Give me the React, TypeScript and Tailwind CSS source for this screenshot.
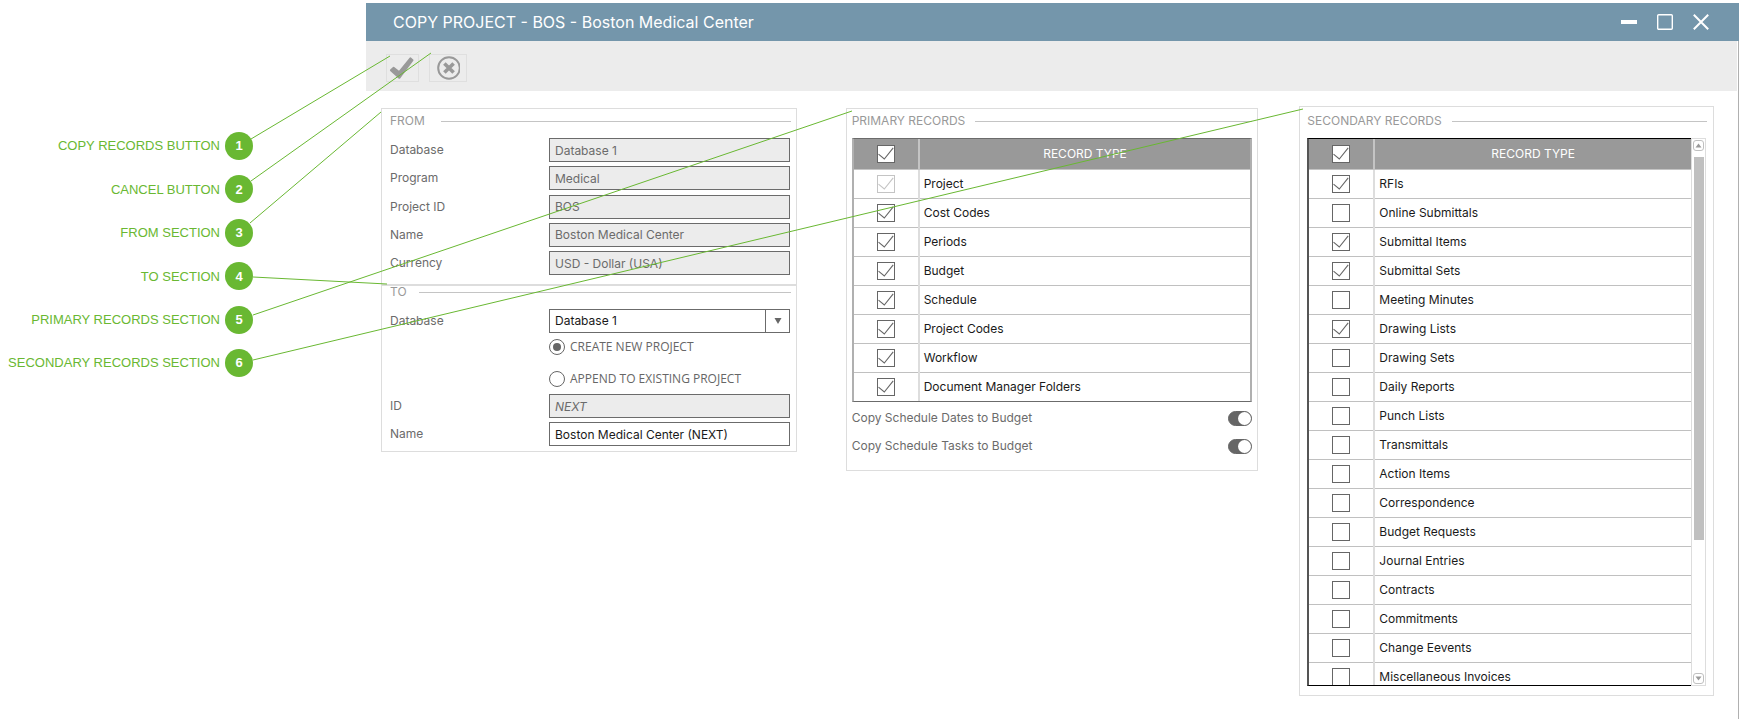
import type { ReactNode } from 'react';

const callouts = [
  'COPY RECORDS BUTTON',
  'CANCEL BUTTON',
  'FROM SECTION',
  'TO SECTION',
  'PRIMARY RECORDS SECTION',
  'SECONDARY RECORDS SECTION',
];

const leaders = [
  [251, 139, 390, 56],
  [251, 181, 431, 53],
  [250, 223, 381, 112],
  [253, 277, 387, 284],
  [253, 315, 852, 111],
  [253, 360, 1303, 109],
];

const fromFields = [
  ['Database', 'Database 1'],
  ['Program', 'Medical'],
  ['Project ID', 'BOS'],
  ['Name', 'Boston Medical Center'],
  ['Currency', 'USD - Dollar (USA)'],
];

type RecordRow = { name: string; checked?: boolean; locked?: boolean };

const primary: RecordRow[] = [
  { name: 'Project', checked: true, locked: true },
  { name: 'Cost Codes', checked: true },
  { name: 'Periods', checked: true },
  { name: 'Budget', checked: true },
  { name: 'Schedule', checked: true },
  { name: 'Project Codes', checked: true },
  { name: 'Workflow', checked: true },
  { name: 'Document Manager Folders', checked: true },
];

const secondary: RecordRow[] = [
  { name: 'RFIs', checked: true },
  { name: 'Online Submittals' },
  { name: 'Submittal Items', checked: true },
  { name: 'Submittal Sets', checked: true },
  { name: 'Meeting Minutes' },
  { name: 'Drawing Lists', checked: true },
  { name: 'Drawing Sets' },
  { name: 'Daily Reports' },
  { name: 'Punch Lists' },
  { name: 'Transmittals' },
  { name: 'Action Items' },
  { name: 'Correspondence' },
  { name: 'Budget Requests' },
  { name: 'Journal Entries' },
  { name: 'Contracts' },
  { name: 'Commitments' },
  { name: 'Change Eevents' },
  { name: 'Miscellaneous Invoices' },
];

function Legend({ children, gap }: { children: ReactNode; gap: string }) {
  return (
    <div className={`flex h-6 items-center ${gap}`}>
      <h2 className="text-xs text-[#999]">{children}</h2>
      <span className="h-px flex-1 bg-[#c4c4c4]" />
    </div>
  );
}

function Check({ label, checked, locked }: { label: string; checked?: boolean; locked?: boolean }) {
  return (
    <label className={`relative mx-auto block size-[18px] ${locked ? 'text-[#c4c4c4]' : 'text-[#666]'}`}>
      <input
        type="checkbox"
        aria-label={label}
        defaultChecked={checked}
        disabled={locked}
        className="peer block size-[18px] appearance-none border border-current bg-white"
      />
      <svg
        viewBox="0 0 18 18"
        className="pointer-events-none absolute inset-0 hidden size-[18px] peer-checked:block"
        fill="none"
        stroke="currentColor"
        strokeWidth="1.1"
      >
        <path d="M1.5 9.2 7.3 14 16.2 2.8" />
      </svg>
    </label>
  );
}

function RecordTable({ rows, label }: { rows: RecordRow[]; label: string }) {
  return (
    <table aria-label={label} className="w-full table-fixed border-collapse text-xs">
      <colgroup>
        <col className="w-[65px]" />
        <col />
      </colgroup>
      <thead>
        <tr className="h-[30px] border-b border-[#c4c4c4] bg-[#999] text-white">
          <th scope="col" className="border-r-2 border-[#c4c4c4] p-0">
            <Check label={`Select all ${label}`} checked />
          </th>
          <th scope="col" className="p-0 font-normal">RECORD TYPE</th>
        </tr>
      </thead>
      <tbody>
        {rows.map((r) => (
          <tr key={r.name} className="h-[29px] border-b border-[#c0c0c0] last:border-b-0">
            <td className="border-r-2 border-[#ddd] p-0">
              <Check label={r.name} checked={r.checked} locked={r.locked} />
            </td>
            <td className="px-1 py-0 text-[#1a1a1a]">{r.name}</td>
          </tr>
        ))}
      </tbody>
    </table>
  );
}

function Toggle({ id, children }: { id: string; children: ReactNode }) {
  return (
    <div className="flex h-7 items-center justify-between">
      <label htmlFor={id} className="text-xs text-[#6b6b6b]">{children}</label>
      <input
        id={id}
        type="checkbox"
        role="switch"
        defaultChecked
        className="h-[15px] w-6 appearance-none rounded-full border border-[#666] bg-[#666] before:block before:size-[13px] before:rounded-full before:bg-white checked:before:ml-[9px]"
      />
    </div>
  );
}

const fieldBase = 'h-6 w-full border border-[#6b6b6b] px-[5px] text-xs';

function Field({ id, label, children }: { id: string; label: string; children: ReactNode }) {
  return (
    <div className="flex items-center">
      <label htmlFor={id} className="w-[159px] shrink-0 text-[#6b6b6b]">{label}</label>
      <div className="min-w-0 flex-1">{children}</div>
    </div>
  );
}

function ProjectRadio({ children, checked }: { children: ReactNode; checked?: boolean }) {
  return (
    <label className="flex h-4 items-center gap-[5px] font-['Open_Sans',sans-serif] text-xs text-[#666]">
      <input
        type="radio"
        name="target"
        defaultChecked={checked}
        className="size-4 appearance-none rounded-full border border-[#666] bg-white p-[3px] before:block before:size-2 before:rounded-full checked:before:bg-[#666]"
      />
      {children}
    </label>
  );
}

function ScrollArrow({ down }: { down?: boolean }) {
  return (
    <button
      type="button"
      aria-label={down ? 'Scroll down' : 'Scroll up'}
      className="flex size-[11px] items-center justify-center rounded-[3px] border border-[#c0c0c0] text-[#999]"
    >
      <svg viewBox="0 0 7 5" className="h-[5px] w-[7px]" fill="currentColor">
        <path d={down ? 'M0.5 0.5h6L3.5 4.5z' : 'M0.5 4.5h6L3.5 0.5z'} />
      </svg>
    </button>
  );
}

export default function App() {
  return (
    <div className="relative flex min-h-screen bg-white pt-[3px] font-[Inter,sans-serif] text-xs">
      <aside className="w-[366px] shrink-0 pt-[129px]">
        <ol className="flex h-[245px] w-[253px] flex-col justify-between font-['Liberation_Sans',sans-serif] text-[13px] text-[#69b832]">
          {callouts.map((c, i) => (
            <li key={c} className="flex items-center justify-end gap-[5px]">
              <span>{c}</span>
              <span className="flex size-7 items-center justify-center rounded-full bg-[#69b832] font-bold text-white">
                {i + 1}
              </span>
            </li>
          ))}
        </ol>
      </aside>

      <main className="mr-[3px] flex min-w-0 flex-1 flex-col">
        <header className="flex h-[38px] items-center justify-between bg-[#7496ab] pr-[30px] pl-[27px] text-white">
          <h1 className="text-base">COPY PROJECT - BOS - Boston Medical Center</h1>
          <div className="flex items-center gap-5">
            <button type="button" aria-label="Minimize">
              <svg viewBox="0 0 16 16" className="size-4" fill="currentColor">
                <path d="M0 6h16v4H0z" />
              </svg>
            </button>
            <button type="button" aria-label="Maximize">
              <svg viewBox="0 0 16 16" className="size-4" fill="none" stroke="currentColor" strokeWidth="1.4">
                <rect x="0.7" y="0.7" width="14.6" height="14.6" rx="1" />
              </svg>
            </button>
            <button type="button" aria-label="Close">
              <svg viewBox="0 0 16 16" className="size-4" fill="none" stroke="currentColor" strokeWidth="2">
                <path d="M0.8 0.8 15.2 15.2M15.2 0.8 0.8 15.2" />
              </svg>
            </button>
          </div>
        </header>

        <div className="mb-[3px] flex-1 border-r border-[#b0b0b0]">
          <div className="mr-px flex h-[50px] items-center gap-[10px] bg-[#ececec] pt-1 pl-5">
            <button type="button" aria-label="Copy records" className="h-7 w-[33px] border border-[#dfdfdf]">
              <svg viewBox="0 0 31 26" className="h-[26px] w-[31px]" fill="#999">
                <path d="M3.2 14.6 6 11.9Q6.6 11.4 7.2 11.9L12 15.7 22.6 2.7Q23.2 2 23.9 2.6L26.2 4.5Q26.8 5.1 26.3 5.8L13.3 23.2Q12.3 24.2 11.3 23.2L3.2 16Q2.6 15.3 3.2 14.6z" />
              </svg>
            </button>
            <button type="button" aria-label="Cancel" className="flex h-7 w-[38px] items-center justify-center border border-[#dfdfdf]">
              <svg viewBox="0 0 24 24" className="size-6" fill="none" stroke="#999">
                <circle cx="13" cy="12" r="10.8" strokeWidth="2" />
                <path d="M8.4 7.4 17.6 16.6M17.6 7.4 8.4 16.6" strokeWidth="3.6" />
              </svg>
            </button>
          </div>

          <div className="flex items-start pt-[15px] pr-6 pl-[15px]">
            <div className="mt-[2px] mr-[49px] min-w-0 flex-[416]">
              <section className="border border-[#ddd] pr-[5px] pb-[9px] pl-2">
                <Legend gap="gap-4">FROM</Legend>
                <div className="mt-[5px] mr-px flex h-[137px] flex-col justify-between">
                  {fromFields.map(([label, value]) => (
                    <Field key={label} id={`from-${label}`} label={label}>
                      <input
                        id={`from-${label}`}
                        readOnly
                        defaultValue={value}
                        className={`${fieldBase} bg-[#ececec] text-[#6b6b6b]`}
                      />
                    </Field>
                  ))}
                </div>
              </section>
              <section className="border border-[#ddd] pr-[5px] pb-[5px] pl-2">
                <div className="-mt-[6px]">
                  <Legend gap="gap-3">TO</Legend>
                </div>
                <div className="mt-[5px] mr-px flex flex-col gap-1">
                  <Field id="to-database" label="Database">
                    <div className="relative">
                      <select id="to-database" className={`${fieldBase} block appearance-none bg-white text-[#1a1a1a]`}>
                        <option>Database 1</option>
                      </select>
                      <span className="pointer-events-none absolute inset-y-0 right-0 flex w-[25px] items-center justify-center border-l border-[#6b6b6b] text-[#666]">
                        <svg viewBox="0 0 8 8" className="size-2" fill="currentColor">
                          <path d="M0.5 1h7L4 7z" />
                        </svg>
                      </span>
                    </div>
                  </Field>
                  <div className="mt-[2px] mb-[3px] flex flex-col gap-4 pl-[159px]">
                    <ProjectRadio checked>CREATE NEW PROJECT</ProjectRadio>
                    <ProjectRadio>APPEND TO EXISTING PROJECT</ProjectRadio>
                  </div>
                  <Field id="to-id" label="ID">
                    <input id="to-id" readOnly defaultValue="NEXT" className={`${fieldBase} bg-[#ececec] text-[#6b6b6b] italic`} />
                  </Field>
                  <Field id="to-name" label="Name">
                    <input id="to-name" defaultValue="Boston Medical Center (NEXT)" className={`${fieldBase} bg-white text-[#1a1a1a]`} />
                  </Field>
                </div>
              </section>
            </div>

            <div className="mt-[2px] mr-[41px] min-w-0 flex-[413]">
              <section className="border border-[#ddd] px-[5px] pb-[10px]">
                <Legend gap="gap-[10px]">PRIMARY RECORDS</Legend>
                <div className="mt-[5px] border-x-2 border-y border-x-[#b0b0b0] border-y-[#6b6b6b]">
                  <RecordTable rows={primary} label="Primary records" />
                </div>
                <div className="mt-[2px]">
                  <Toggle id="dates">Copy Schedule Dates to Budget</Toggle>
                  <Toggle id="tasks">Copy Schedule Tasks to Budget</Toggle>
                </div>
              </section>
            </div>

            <div className="min-w-0 flex-[415]">
              <section className="border border-[#ddd] pt-[2px] pr-[6px] pb-[9px] pl-[7px]">
                <Legend gap="gap-[10px]">SECONDARY RECORDS</Legend>
                <div className="mt-[5px] flex max-h-[548px]">
                  <div className="min-w-0 flex-1 overflow-hidden border-y border-l-2 border-black border-l-[#555]">
                    <RecordTable rows={secondary} label="Secondary records" />
                  </div>
                  <div className="mr-px flex w-[15px] flex-col items-center border border-[#ddd] py-px">
                    <ScrollArrow />
                    <div className="mt-[6px] w-[10px] flex-[384] bg-[#c0c0c0]" />
                    <div className="flex-[133]" />
                    <ScrollArrow down />
                  </div>
                </div>
              </section>
            </div>
          </div>
        </div>
      </main>

      <svg className="pointer-events-none absolute inset-0 size-full" stroke="#69b832" strokeWidth="1">
        {leaders.map(([x1, y1, x2, y2]) => (
          <line key={y1} x1={x1} y1={y1} x2={x2} y2={y2} />
        ))}
      </svg>
    </div>
  );
}
